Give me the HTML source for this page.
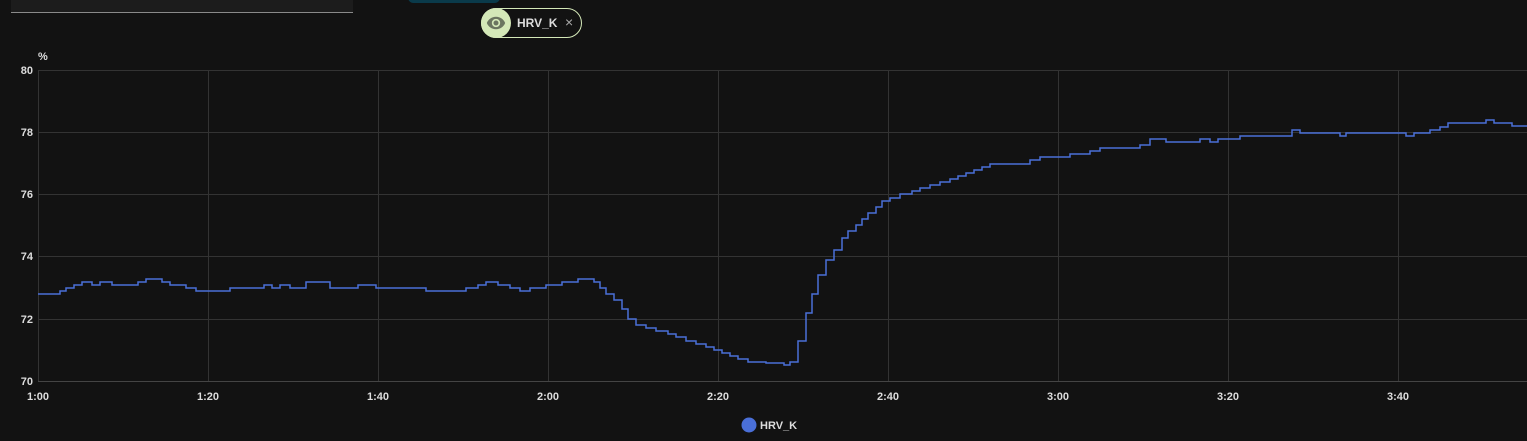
<html><head><style>
body{margin:0;width:1527px;height:441px;background:#121212;overflow:hidden;font-family:"Liberation Sans",sans-serif;position:relative}
</style></head><body>
<div style="position:absolute;left:11px;top:0;width:342px;height:12px;background:#1c1c1c;border-bottom:1px solid #8a8a8a"></div>
<div style="position:absolute;left:408px;top:-8px;width:92px;height:11px;background:#0a3a4a;border-radius:6px"></div>
<div style="position:absolute;left:481px;top:8px;width:101px;height:30px;border:1px solid #d4e8b8;border-radius:16px;box-sizing:border-box"></div>
<div style="position:absolute;left:481px;top:8px;width:30px;height:30px;background:#d4e8b8;border-radius:15px"></div>
<svg style="position:absolute;left:486px;top:13px" width="20" height="20" viewBox="0 0 24 24"><path fill="#6b7560" d="M12 4.5C7 4.5 2.7 7.6 1 12c1.7 4.4 6 7.5 11 7.5s9.3-3.1 11-7.5c-1.7-4.4-6-7.5-11-7.5zM12 17a5 5 0 110-10 5 5 0 010 10zm0-8a3 3 0 100 6 3 3 0 000-6z"/></svg>
<div style="position:absolute;left:517px;top:16px;color:#ddd;font-size:12px;font-weight:bold">HRV_K</div>
<div style="position:absolute;left:565px;top:14px;color:#aaa;font-size:14px">×</div>
<svg style="position:absolute;left:0;top:0" width="1527" height="441">
<g stroke="#333" stroke-width="1">
<line x1="38" y1="70.5" x2="1527" y2="70.5"/><line x1="38" y1="132.5" x2="1527" y2="132.5"/><line x1="38" y1="194.5" x2="1527" y2="194.5"/><line x1="38" y1="256.5" x2="1527" y2="256.5"/><line x1="38" y1="319.5" x2="1527" y2="319.5"/><line x1="38" y1="381.5" x2="1527" y2="381.5" stroke="#444"/>
<line x1="38.5" y1="70" x2="38.5" y2="381"/><line x1="208.5" y1="70" x2="208.5" y2="381"/><line x1="378.5" y1="70" x2="378.5" y2="381"/><line x1="548.5" y1="70" x2="548.5" y2="381"/><line x1="718.5" y1="70" x2="718.5" y2="381"/><line x1="888.5" y1="70" x2="888.5" y2="381"/><line x1="1058.5" y1="70" x2="1058.5" y2="381"/><line x1="1228.5" y1="70" x2="1228.5" y2="381"/><line x1="1398.5" y1="70" x2="1398.5" y2="381"/>
</g>
<g fill="#ddd" font-size="11" font-weight="bold" font-family="Liberation Sans,sans-serif">
<text x="38" y="60">%</text>
<text x="33" y="74" text-anchor="end">80</text><text x="33" y="136" text-anchor="end">78</text><text x="33" y="198" text-anchor="end">76</text><text x="33" y="260" text-anchor="end">74</text><text x="33" y="323" text-anchor="end">72</text><text x="33" y="385" text-anchor="end">70</text>
<g text-anchor="middle"><text x="38" y="400">1:00</text><text x="208" y="400">1:20</text><text x="378" y="400">1:40</text><text x="548" y="400">2:00</text><text x="718" y="400">2:20</text><text x="888" y="400">2:40</text><text x="1058" y="400">3:00</text><text x="1228" y="400">3:20</text><text x="1398" y="400">3:40</text></g>
<text x="760" y="429">HRV_K</text>
</g>
<circle cx="749" cy="425" r="7.5" fill="#4a6fd8"/>
<path fill="none" stroke="#4a6fd8" stroke-width="1.5" d="M38 294H60V291H66V288H74V285H82V282H92V285H100V282H112V285H138V282H146V279H162V282H170V285H186V288H196V291H230V288H264V285H272V288H280V285H290V288H306V282H330V288H358V285H376V288H426V291H466V288H478V285H486V282H498V285H510V288H520V291H530V288H546V285H562V282H578V279H594V282H600V288H606V294H614V300H622V309H628V319H636V325H646V328H656V331H668V334H676V337H686V341H696V344H706V347H714V350H722V353H730V356H738V359H748V362H766V363H784V365H790V362H798V341H806V313H812V294H818V275H826V260H834V250H842V238H848V231H856V225H862V219H868V213H876V207H882V201H890V198H900V194H912V191H920V188H930V185H940V182H950V179H958V176H966V173H974V170H982V167H990V164H1030V160H1040V157H1070V154H1090V151H1100V148H1140V145H1150V139H1166V142H1200V139H1210V142H1218V139H1240V136H1292V130H1300V133H1340V136H1346V133H1406V136H1414V133H1430V130H1440V127H1448V123H1486V120H1494V123H1512V126H1527"/>
</svg>
</body></html>
